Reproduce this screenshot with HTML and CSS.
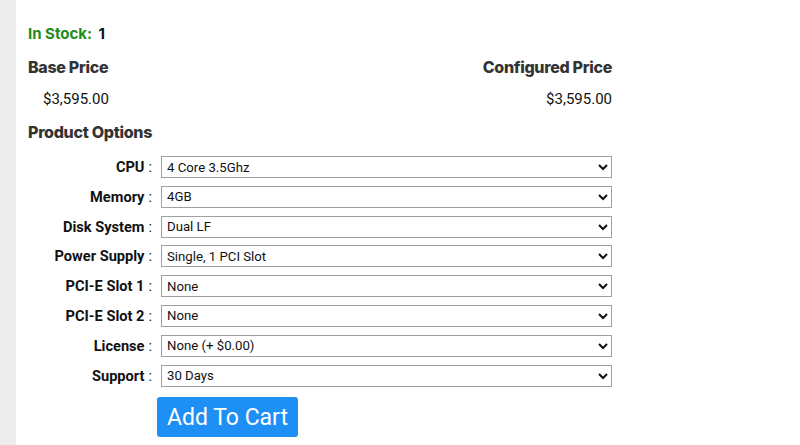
FILE: index.html
```html
<!DOCTYPE html>
<html lang="en">
<head>
    <meta charset="UTF-8">
    <meta name="viewport" content="width=device-width, initial-scale=1.0">
    <title>Product Options</title>
    <link rel="stylesheet" href="styles.css">
</head>
<body>
    <div class="page">
        <div class="product">
            <p class="stock"><span class="stock-label">In Stock:</span> <span class="stock-count">1</span></p>

            <div class="prices">
                <div class="price-col">
                    <h3 class="heading">Base Price</h3>
                    <p class="price price-base">$3,595.00</p>
                </div>
                <div class="price-col price-right">
                    <h3 class="heading">Configured Price</h3>
                    <p class="price">$3,595.00</p>
                </div>
            </div>

            <h3 class="heading">Product Options</h3>

            <form class="options">
                <label class="opt-label" for="cpu">CPU<span class="colon">:</span></label>
                <select class="opt-select" id="cpu"><option>4 Core 3.5Ghz</option></select>

                <label class="opt-label" for="mem">Memory<span class="colon">:</span></label>
                <select class="opt-select" id="mem"><option>4GB</option></select>

                <label class="opt-label" for="disk">Disk System<span class="colon">:</span></label>
                <select class="opt-select" id="disk"><option>Dual LF</option></select>

                <label class="opt-label" for="psu">Power Supply<span class="colon">:</span></label>
                <select class="opt-select" id="psu"><option>Single, 1 PCI Slot</option></select>

                <label class="opt-label" for="pci1">PCI-E Slot 1<span class="colon">:</span></label>
                <select class="opt-select" id="pci1"><option>None</option></select>

                <label class="opt-label" for="pci2">PCI-E Slot 2<span class="colon">:</span></label>
                <select class="opt-select" id="pci2"><option>None</option></select>

                <label class="opt-label" for="lic">License<span class="colon">:</span></label>
                <select class="opt-select" id="lic"><option>None (+ $0.00)</option></select>

                <label class="opt-label" for="sup">Support<span class="colon">:</span></label>
                <select class="opt-select" id="sup"><option>30 Days</option></select>

                <div class="cart-cell">
                    <button type="button" class="btn-cart">Add To Cart</button>
                </div>
            </form>
        </div>
    </div>
</body>
</html>
```

FILE: styles.css
```css
html, body {
    margin: 0;
    height: 100%;
}
body {
    background: #ededed;
    font-family: Roboto, "Liberation Sans", Arial, sans-serif;
    color: #222;
}
.page {
    margin-left: 16px;
    min-height: 100%;
    background: #fff;
    overflow: hidden;
}
.product {
    width: 584px;
    padding: 25px 0 0 12px;
}

.stock {
    margin: 0;
    font-family: Inter, Roboto, sans-serif;
    font-size: 15px;
    font-weight: 700;
    line-height: 18px;
}
.stock-label {
    color: #1c8c1c;
    margin-right: 3px;
}
.stock-count {
    color: #111;
}

.heading {
    margin: 0;
    font-family: Inter, Roboto, sans-serif;
    font-size: 16px;
    font-weight: 800;
    color: #333;
    line-height: 20px;
    letter-spacing: -0.3px;
}

.prices {
    display: flex;
    justify-content: space-between;
    margin-top: 14px;
}
.price-right {
    text-align: right;
}
.price {
    margin: 13px 0 14px;
    font-size: 15px;
    line-height: 18px;
    color: #111;
}
.price-base {
    padding-left: 15px;
}

.options {
    display: grid;
    grid-template-columns: 124px 451px;
    column-gap: 9px;
    row-gap: 7.8px;
    align-items: center;
    margin-top: 14px;
}
.opt-label {
    text-align: right;
    font-size: 14.6px;
    font-weight: 700;
    color: #111;
}
.colon {
    font-weight: 400;
    margin-left: 4px;
}
.opt-select {
    height: 22px;
    border: 1px solid #a0a0a0;
    border-radius: 0;
    background: #fff;
    font-family: Roboto, "Liberation Sans", sans-serif;
    font-size: 13.2px;
    color: #111;
    padding: 0 2px 0 1px;
}

.cart-cell {
    grid-column: 2;
    margin-left: -4px;
    padding-top: 3px;
}
.btn-cart {
    height: 40px;
    padding: 0 10px;
    border: 0;
    border-radius: 3px;
    background: #1e8ff5;
    color: #fff;
    font-family: Roboto, "Liberation Sans", sans-serif;
    font-size: 23px;
    cursor: pointer;
}
```
